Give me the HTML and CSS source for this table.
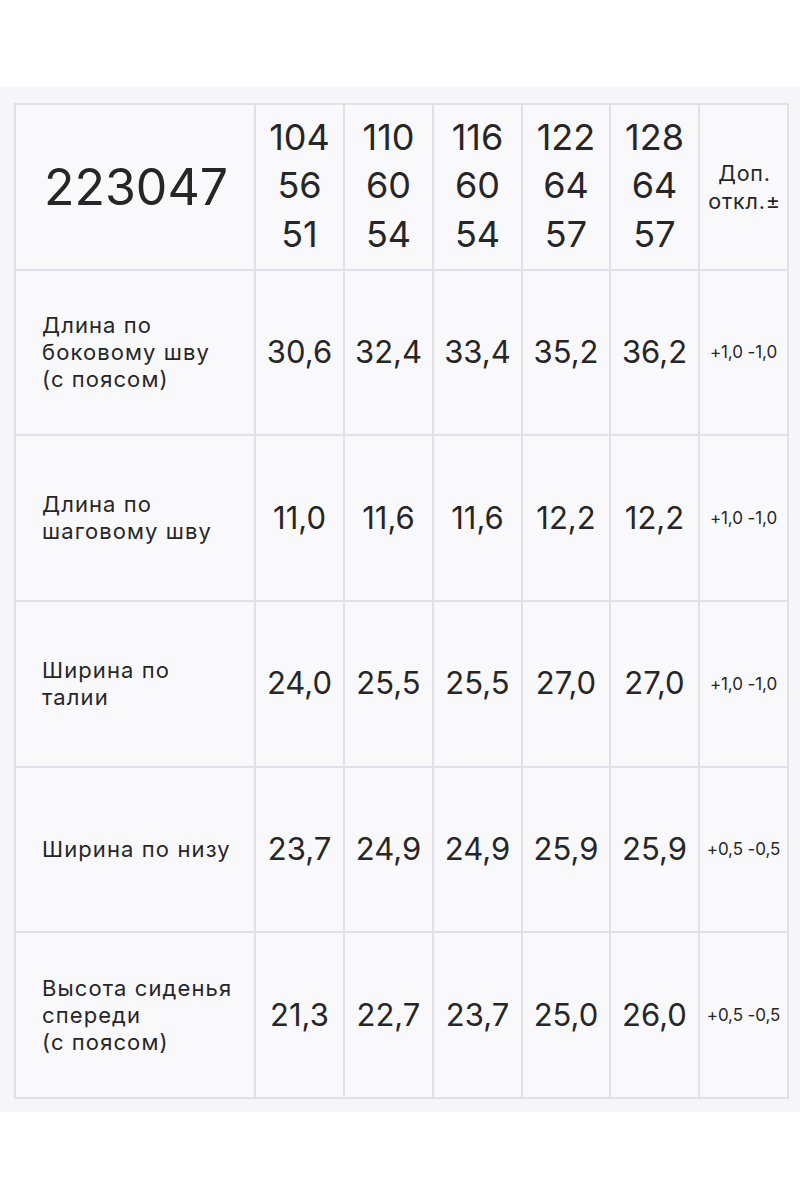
FILE: index.html
```html
<!DOCTYPE html>
<html lang="ru">
<head>
<meta charset="utf-8">
<title>223047</title>
<link rel="stylesheet" href="styles.css">
</head>
<body>
<div class="panel">
  <div class="table">
    <div class="cell code">223047</div>
    <div class="cell size">104<br>56<br>51</div>
    <div class="cell size">110<br>60<br>54</div>
    <div class="cell size">116<br>60<br>54</div>
    <div class="cell size">122<br>64<br>57</div>
    <div class="cell size">128<br>64<br>57</div>
    <div class="cell tolhead">Доп.<br>откл.±</div>

    <div class="cell label">Длина по<br>боковому шву<br>(с поясом)</div>
    <div class="cell val">30,6</div>
    <div class="cell val">32,4</div>
    <div class="cell val">33,4</div>
    <div class="cell val">35,2</div>
    <div class="cell val">36,2</div>
    <div class="cell tol">+1,0 -1,0</div>

    <div class="cell label">Длина по<br>шаговому шву</div>
    <div class="cell val">11,0</div>
    <div class="cell val">11,6</div>
    <div class="cell val">11,6</div>
    <div class="cell val">12,2</div>
    <div class="cell val">12,2</div>
    <div class="cell tol">+1,0 -1,0</div>

    <div class="cell label">Ширина по<br>талии</div>
    <div class="cell val">24,0</div>
    <div class="cell val">25,5</div>
    <div class="cell val">25,5</div>
    <div class="cell val">27,0</div>
    <div class="cell val">27,0</div>
    <div class="cell tol">+1,0 -1,0</div>

    <div class="cell label">Ширина по низу</div>
    <div class="cell val">23,7</div>
    <div class="cell val">24,9</div>
    <div class="cell val">24,9</div>
    <div class="cell val">25,9</div>
    <div class="cell val">25,9</div>
    <div class="cell tol">+0,5 -0,5</div>

    <div class="cell label">Высота сиденья<br>спереди<br>(с поясом)</div>
    <div class="cell val">21,3</div>
    <div class="cell val">22,7</div>
    <div class="cell val">23,7</div>
    <div class="cell val">25,0</div>
    <div class="cell val">26,0</div>
    <div class="cell tol">+0,5 -0,5</div>
  </div>
</div>
</body>
</html>
```

FILE: styles.css
```css
html, body {
  margin: 0;
  padding: 0;
  background: #ffffff;
}

body {
  font-family: Inter, "Liberation Sans", sans-serif;
  color: #262626;
}

.panel {
  margin-top: 87px;
  height: 1025px;
  box-sizing: border-box;
  padding: 16px 0 0 14px;
  background: #f6f6f8;
}

.table {
  width: 775px;
  height: 996px;
  box-sizing: border-box;
  display: grid;
  grid-template-columns: 238px 87px 87px 87px 86px 87px 87px;
  grid-template-rows: repeat(6, 1fr);
  gap: 2px;
  padding: 2px;
  background: #e0e0e9;
}

.cell {
  background: #f9f9fb;
  display: flex;
  align-items: center;
  justify-content: center;
  text-align: center;
}

.code {
  font-size: 50px;
  padding-left: 2px;
}

.size {
  font-size: 36px;
  line-height: 48.5px;
  padding-bottom: 3px;
}

.tolhead {
  font-size: 21.5px;
  line-height: 28px;
  letter-spacing: 0.8px;
  padding-left: 2px;
}

.label {
  justify-content: flex-start;
  text-align: left;
  padding-left: 26px;
  font-size: 22px;
  line-height: 26.8px;
  letter-spacing: 1.1px;
}

.val {
  font-size: 31px;
  padding-bottom: 2px;
}

.tol {
  font-size: 17px;
  letter-spacing: -0.1px;
}
```
